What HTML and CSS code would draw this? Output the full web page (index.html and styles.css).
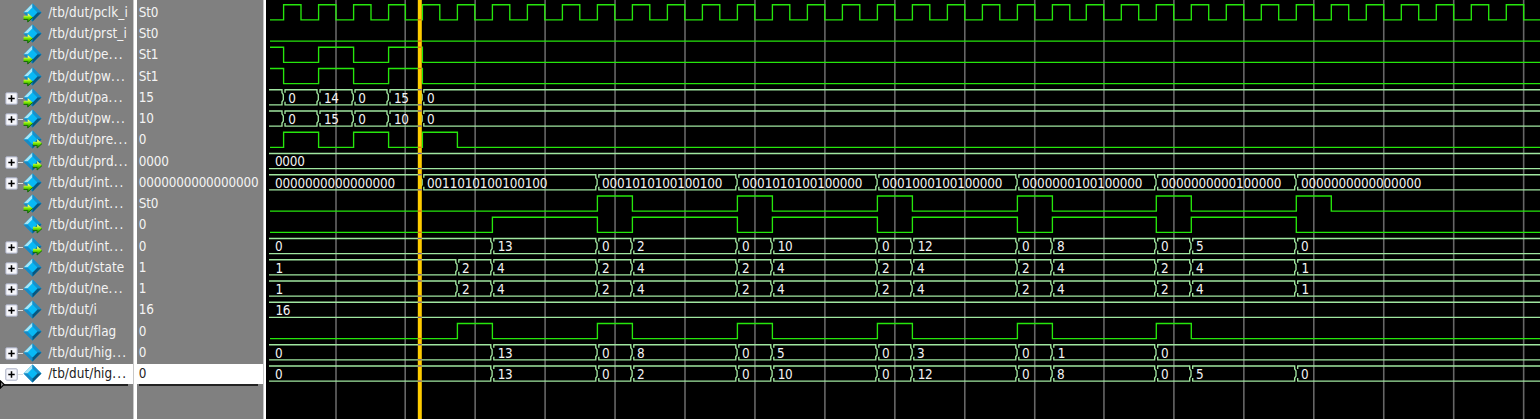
FILE: index.html
```html
<!DOCTYPE html>
<html lang="en">
<head>
<meta charset="utf-8">
<title>Wave</title>
<link rel="stylesheet" href="styles.css">
</head>
<body>
<svg class="defs" width="0" height="0" aria-hidden="true">
  <defs>
    <linearGradient id="arrowFill" x1="0" y1="0" x2="0" y2="1">
      <stop offset="0.2" stop-color="#f4ff70"/><stop offset="0.5" stop-color="#7ce800"/><stop offset="0.9" stop-color="#148a00"/>
    </linearGradient>
    <symbol id="diamond" viewBox="0 0 20 20">
      <path d="M10 .5 19.4 10 10 19.4.6 10z" fill="#078fd0"/>
      <path d="M10 .5V5L5 10H.6z" fill="#a5e6f7"/>
      <path d="M10 .5 19.4 10H15L10 5z" fill="#1690cb"/>
      <path d="M.6 10H5l5 5v4.4z" fill="#168bc6"/>
      <path d="M19.4 10 10 19.4V15l5-5z" fill="#075780"/>
      <path d="M10 4.8 15.2 10 10 15.2 4.8 10z" fill="#08b9f5"/>
    </symbol>
    <symbol id="arrow" viewBox="0 0 10 10">
      <path d="M.3 3.2H4.6V.3L9.7 5 4.6 9.7V7H.3z" fill="url(#arrowFill)"/>
      <path d="M.3 7H4.6V9.7L9.7 5" fill="none" stroke="#176c08" stroke-width="1"/>
    </symbol>
  </defs>
</svg>
<main class="viewer">
  <section class="pane names" id="names"></section>
  <div class="divider"></div>
  <section class="pane values" id="values"></section>
  <div class="divider"></div>
  <section class="waves"><svg id="plot" class="plot" viewBox="266 0 1274 419" width="1274" height="419"></svg></section>
</main>
<svg class="marker" viewBox="0 0 6 9"><path d="M.5 1 4.2 4.5.5 8z" fill="#888" stroke="#000" stroke-width="1.1"/></svg>
<script src="wave.js"></script>
</body>
</html>
```
FILE: styles.css
```css
* { box-sizing: border-box; }
body {
  margin: 0;
  width: 1540px;
  height: 419px;
  overflow: hidden;
  background: #000;
  font-family: "DejaVu Sans Condensed", "DejaVu Sans", sans-serif;
  font-stretch: condensed;
  font-size: 13.4px;
}
.defs { display: block; }
.viewer { display: flex; height: 419px; }
.pane { background: #808080; color: #f4f4f4; padding-top: 2.75px; overflow: hidden; }
.names { width: 133px; }
.values { width: 126px; }
.divider { width: 3.5px; background: #fff; border-left: 1px solid #c8c8c8; }
.divider:nth-of-type(2) { width: 3px; }
.row { display: flex; height: 21.25px; align-items: flex-start; line-height: 19.6px; white-space: pre; }
.names .row { padding-left: 4.6px; }
.values .row { padding-left: 2.2px; letter-spacing: -0.17px; }
.selected { background: #fff; color: #222; height: 20.3px; }
.rule { height: 1.4px; background: #222; margin: 0 5px 0 4px; }
.values .rule { margin: 0 5px 0 2px; }
.tree { width: 18.6px; height: 20px; display: flex; align-items: center; flex: none; padding-top: 1px; }
.plus { width: 13px; height: 13px; flex: none; }
.link { width: 6px; height: 1px; background: #dcdcdc; }
.glyph { width: 20px; height: 20px; flex: none; overflow: visible; }
.label { margin-left: 5px; letter-spacing: 0.08px; }
.dots { letter-spacing: 1.2px; }
.waves { flex: 1; background: #000; overflow: hidden; }
.plot { display: block; }
.plot text { fill: #f4f4f4; font-size: 13.4px; }
.grid { stroke: #666; stroke-width: 1.6; }
.signal { fill: none; stroke: #26e60c; stroke-width: 1.35; }
.bus { fill: none; stroke: #a0e6a0; stroke-width: 1.35; }
.cursor { fill: #ffcc00; }
.marker { position: absolute; left: 0; top: 380px; width: 6px; height: 9px; }
```
FILE: wave.js
```js
const PITCH = 21.25, LOW = 19.8, SWING = 15.1, START = 270, END = 1541;

// x position of the k-th rising clock edge
const edge = k => k < 4 ? 283.6 + 35 * k : k < 23 ? 422.4 + 35 * (k - 4) : 1086.3 + 35 * (k - 23);

const clock = [];
for (let k = 0; k < 36; k++) {
  const x = edge(k);
  clock.push(x, x + (k === 3 ? 16.8 : 17.4));
}
const at = list => list.map(edge);
const step = [[5, '2'], [6, '4'], [9, '2'], [10, '4'], [13, '2'], [14, '4'], [17, '2'], [18, '4'], [21, '2'], [22, '4'], [25, '2'], [26, '4'], [29, '1']];
const index = [[6, '13'], [9, '0'], [10, '2'], [13, '0'], [14, '10'], [17, '0'], [18, '12'], [21, '0'], [22, '8'], [25, '0'], [26, '5'], [29, '0']];

const rows = [
  { name: 'pclk_i', value: 'St0', dir: 'in', level: 0, flips: clock },
  { name: 'prst_i', value: 'St0', dir: 'in', level: 0, flips: [] },
  { name: 'pe...', value: 'St1', dir: 'in', level: 1, flips: at([0, 1, 2, 3, 4]) },
  { name: 'pw...', value: 'St1', dir: 'in', level: 1, flips: at([0, 1, 2, 3, 4]) },
  { name: 'pa...', value: '15', dir: 'in', first: '', bus: [[0, '0'], [1, '14'], [2, '0'], [3, '15'], [4, '0']] },
  { name: 'pw...', value: '10', dir: 'in', first: '', bus: [[0, '0'], [1, '15'], [2, '0'], [3, '10'], [4, '0']] },
  { name: 'pre...', value: '0', dir: 'out', level: 0, flips: at([0, 1, 2, 3, 4, 5]) },
  { name: 'prd...', value: '0000', dir: 'out', first: '0000', bus: [] },
  { name: 'int...', value: '0000000000000000', dir: 'in', first: '0000000000000000', bus: [
    [4, '0011010100100100'], [9, '0001010100100100'], [13, '0001010100100000'], [17, '0001000100100000'],
    [21, '0000000100100000'], [25, '0000000000100000'], [29, '0000000000000000']] },
  { name: 'int...', value: 'St0', dir: 'in', level: 0, flips: at([9, 10, 13, 14, 17, 18, 21, 22, 25, 26, 29, 30]) },
  { name: 'int...', value: '0', dir: 'out', level: 0, flips: at([6, 9, 10, 13, 14, 17, 18, 21, 22, 25, 26, 29]) },
  { name: 'int...', value: '0', dir: 'out', first: '0', bus: index },
  { name: 'state', value: '1', first: '1', bus: step },
  { name: 'ne...', value: '1', first: '1', bus: step },
  { name: 'i', value: '16', first: '16', bus: [] },
  { name: 'flag', value: '0', level: 0, flips: at([5, 6, 9, 10, 13, 14, 17, 18, 21, 22, 25, 26]) },
  { name: 'hig...', value: '0', first: '0', bus: [[6, '13'], [9, '0'], [10, '8'], [13, '0'], [14, '5'], [17, '0'], [18, '3'], [21, '0'], [22, '1'], [25, '0']] },
  { name: 'hig...', value: '0', first: '0', bus: index }
];

const plus = `<svg class="plus" viewBox="0 0 13 13"><rect x=".8" y=".8" width="11.4" height="11.4" rx="1" fill="#f6f6fb" stroke="#a9aec4"/><path d="M3.3 6.5h6.4M6.5 3.3v6.4" stroke="#000" stroke-width="1.5"/></svg><span class="link"></span>`;

let names = '', values = '', plot = '';
for (let i = 0, x = 336; x < 1540; i++) {
  plot += `<path class="grid" d="M${x} 0V419"/>`;
  x += i === 0 || i === 10 ? 69.2 : 69.95;
}

function label(x, y, text) {
  const shift = text[0] === '1' ? 0.9 : 0.3;
  return text ? `<text x="${x + shift}" y="${y}" textLength="${text.length * 7.52}">${text}</text>` : '';
}

rows.forEach((r, i) => {
  const lo = LOW + PITCH * i, hi = lo - SWING;
  const sel = i === rows.length - 1 ? ' selected' : '';
  const arrow = r.dir ? `<use href="#arrow" x="${r.dir === 'in' ? 0.2 : 9.6}" y="${r.dir === 'in' ? 9.6 : 8.6}" width="9.8" height="9.8"/>` : '';
  const name = r.name.replace('...', '<span class="dots">...</span>');
  names += `<div class="row${sel}"><span class="tree">${r.bus ? plus : ''}</span><svg class="glyph" viewBox="0 0 20 20"><use href="#diamond" width="19" height="19"/>${arrow}</svg><span class="label">/tb/dut/${name}</span></div>`;
  values += `<div class="row${sel}">${r.value}</div>`;

  if (r.flips) {
    let high = r.level, d = `M${START} ${high ? hi : lo}`;
    for (const x of r.flips) {
      high = !high;
      d += `H${x}V${high ? hi : lo}`;
    }
    plot += `<path class="signal" d="${d}H${END}"/>`;
    return;
  }
  let x = START - 1, d = '';
  plot += label(274.6, lo - 2.2, r.first);
  for (const [k, text] of r.bus) {
    const t = edge(k);
    d += `M${x} ${hi}H${t - 1.6}V${hi + 3}L${t - .3} ${hi + 5}V${lo - 5}L${t - 1.6} ${lo - 3}V${lo}H${x}`;
    d += `M${t + 1.4} ${hi}V${hi + 3}M${t + 1.4} ${lo - 3}V${lo}`;
    plot += label(t + 4.4, lo - 2.2, text);
    x = t + 0.8;
  }
  plot += `<path class="bus" d="${d}M${x} ${hi}H${END}M${x} ${lo}H${END}"/>`;
});

plot += '<rect class="cursor" x="417.8" y="0" width="4" height="419"/>';
rows.forEach((r, i) => {
  const lo = LOW + PITCH * i, hi = lo - SWING;
  const marks = r.bus ? [lo, hi] : [i === 2 || i === 3 ? hi : lo];
  for (const y of marks) {
    plot += `<path d="M418 ${y}H421.6" stroke="${r.bus ? '#7560a0' : '#d86a20'}" stroke-width="1.2"/>`;
  }
});

document.getElementById('names').innerHTML = names + '<div class="rule"></div>';
document.getElementById('values').innerHTML = values + '<div class="rule"></div>';
document.getElementById('plot').innerHTML = plot;
```
